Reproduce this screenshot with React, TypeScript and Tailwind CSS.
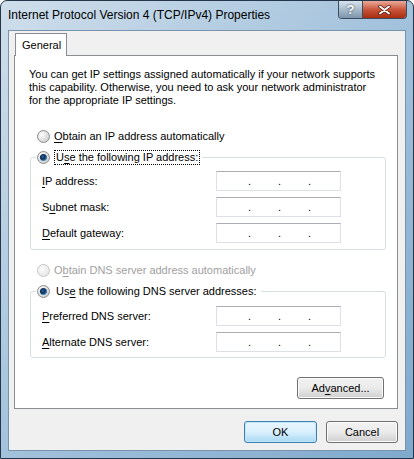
import React from 'react';

const FONT = { fontFamily: '"Liberation Sans", Arial, sans-serif' };

type RadioKind = 'off' | 'on' | 'disabled';

const Radio: React.FC<{ kind: RadioKind }> = ({ kind }) => (
    <svg width="13" height="13" viewBox="0 0 13 13" className="shrink-0">
        <defs>
            <radialGradient id={`rf-${kind}`} cx="35%" cy="35%" r="75%">
                <stop offset="0%" stopColor={kind === 'disabled' ? '#fbfbfb' : '#ffffff'} />
                <stop offset="100%" stopColor={kind === 'disabled' ? '#e4e4e4' : '#c9c9c9'} />
            </radialGradient>
            <radialGradient id="rdot" cx="40%" cy="40%" r="70%">
                <stop offset="0%" stopColor="#2a6bb0" />
                <stop offset="45%" stopColor="#0d2c50" />
                <stop offset="100%" stopColor="#63b4ec" />
            </radialGradient>
        </defs>
        <circle cx="6.5" cy="6.5" r="6" fill={`url(#rf-${kind})`} stroke={kind === 'disabled' ? '#c6c6c6' : '#8d8d8d'} />
        {kind === 'on' && <circle cx="6.5" cy="6.5" r="3.6" fill="url(#rdot)" />}
    </svg>
);

// underlined access key
const K: React.FC<{ children: React.ReactNode }> = ({ children }) => (
    <span className="underline underline-offset-[2px]">{children}</span>
);

const IpBox: React.FC = () => (
    <div className="flex h-[20px] w-[125px] items-center border border-[#dde1e7] border-t-[#abadb3] bg-white pl-[31px] text-[11px] leading-none text-black">
        <span className="w-[3px]">.</span>
        <span className="ml-[27px] w-[3px]">.</span>
        <span className="ml-[27px] w-[3px]">.</span>
    </div>
);

const FieldRow: React.FC<{ children: React.ReactNode }> = ({ children }) => (
    <div className="flex h-[20px] items-center pl-[11px]">
        <span className="w-[174px] text-[11px]">{children}</span>
        <IpBox />
    </div>
);

const VistaButton: React.FC<{ children: React.ReactNode; isDefault?: boolean; w: string }> = ({ children, isDefault, w }) => (
    <button
        className={`h-[22px] ${w} rounded-[3px] border text-[11px] text-black ${
            isDefault
                ? 'border-[#3c7fb1] bg-gradient-to-b from-[#eaf6fd] via-[#d9f0fc] to-[#a7d9f5] shadow-[inset_0_0_0_1px_#c0e7fc]'
                : 'border-[#707070] bg-gradient-to-b from-[#f2f2f2] via-[#ebebeb] to-[#cfcfcf] shadow-[inset_0_0_0_1px_#fcfcfc]'
        }`}
    >
        {children}
    </button>
);

export default function App() {
    return (
        <div className="h-[459px] w-[414px] bg-white" style={FONT}>
            <div className="flex h-[459px] w-[414px] flex-col rounded-t-[7px] border border-[#25364a] bg-gradient-to-br from-[#cfdeeb] via-[#a3c2dc] to-[#7fa9cc]">
                {/* title bar */}
                <div className="flex h-[29px] items-start justify-between">
                    <div className="pl-[7px] pt-[6px] text-[12px] leading-[16px] text-black">
                        Internet Protocol Version 4 (TCP/IPv4) Properties
                    </div>
                    <div className="mr-[6px] flex h-[18px] overflow-hidden rounded-b-[4px] border border-t-0 border-[#3b4d60]">
                        <div className="flex w-[24px] items-center justify-center border-r border-[#3b4d60] bg-gradient-to-b from-[#d8e3ec] via-[#a9bccc] to-[#7d95ab] text-[13px] font-bold text-white [text-shadow:0_0_2px_#203040]">
                            ?
                        </div>
                        <div className="flex w-[43px] items-center justify-center bg-gradient-to-b from-[#e9a999] via-[#c8553b] to-[#a92a0c]">
                            <svg width="13" height="10" viewBox="0 0 13 10">
                                <path d="M2 1.5l9 7M11 1.5l-9 7" stroke="#4a1005" strokeWidth="3.4" strokeLinecap="round" />
                                <path d="M2 1.5l9 7M11 1.5l-9 7" stroke="#ffffff" strokeWidth="2" strokeLinecap="round" />
                            </svg>
                        </div>
                    </div>
                </div>

                {/* client area */}
                <div className="mx-[7px] flex h-[421px] flex-col border border-[#7893ab] bg-[#f0f0f0] text-black">
                    <div className="pl-[6px] pt-[2px]">
                        <div className="relative z-10 -mb-px flex h-[23px] w-[52px] items-center border border-b-0 border-[#898c95] bg-white pl-[6px] text-[11px]">
                            General
                        </div>
                    </div>
                    <div className="ml-[5px] flex h-[354px] w-[384px] flex-col border border-[#898c95] bg-white pl-[14px] text-[11px]">
                        <p className="whitespace-nowrap pt-[12px] leading-[13px]">
                            You can get IP settings assigned automatically if your network supports
                            <br />
                            this capability. Otherwise, you need to ask your network administrator
                            <br />
                            for the appropriate IP settings.
                        </p>

                        <div className="ml-[8px] mt-[21px] flex h-[17px] items-center gap-[4px]">
                            <Radio kind="off" />
                            <span>
                                <K>O</K>btain an IP address automatically
                            </span>
                        </div>

                        <fieldset className="ml-px mt-[4px] w-[356px] rounded-[3px] border border-[#d5dfe5] pb-[6px]">
                            <legend className="ml-[5px] flex h-[17px] items-center gap-[4px] pl-px pr-[2px]">
                                <Radio kind="on" />
                                <span className="border border-dotted border-black px-px leading-[13px]">
                                    U<K>s</K>e the following IP address:
                                </span>
                            </legend>
                            <div className="mt-[5px] flex flex-col gap-[6px]">
                                <FieldRow>
                                    <K>I</K>P address:
                                </FieldRow>
                                <FieldRow>
                                    S<K>u</K>bnet mask:
                                </FieldRow>
                                <FieldRow>
                                    <K>D</K>efault gateway:
                                </FieldRow>
                            </div>
                        </fieldset>

                        <div className="ml-[8px] mt-[12px] flex h-[17px] items-center gap-[4px] text-[#a0a0a0]">
                            <Radio kind="disabled" />
                            <span>
                                O<K>b</K>tain DNS server address automatically
                            </span>
                        </div>

                        <fieldset className="ml-px mt-[4px] w-[356px] rounded-[3px] border border-[#d5dfe5] pb-[5px]">
                            <legend className="ml-[5px] flex h-[17px] items-center gap-[4px] pl-px pr-[2px]">
                                <Radio kind="on" />
                                <span className="px-[2px] leading-[13px]">
                                    Us<K>e</K> the following DNS server addresses:
                                </span>
                            </legend>
                            <div className="mt-[6px] flex flex-col gap-[6px]">
                                <FieldRow>
                                    <K>P</K>referred DNS server:
                                </FieldRow>
                                <FieldRow>
                                    <K>A</K>lternate DNS server:
                                </FieldRow>
                            </div>
                        </fieldset>

                        <div className="mr-[13px] mt-[19px] flex justify-end">
                            <VistaButton w="w-[87px]">
                                Ad<K>v</K>anced...
                            </VistaButton>
                        </div>
                    </div>
                    <div className="flex justify-end gap-[9px] pr-[7px] pt-[12px]">
                        <VistaButton isDefault w="w-[73px]">OK</VistaButton>
                        <VistaButton w="w-[72px]">Cancel</VistaButton>
                    </div>
                </div>
            </div>
        </div>
    );
}
